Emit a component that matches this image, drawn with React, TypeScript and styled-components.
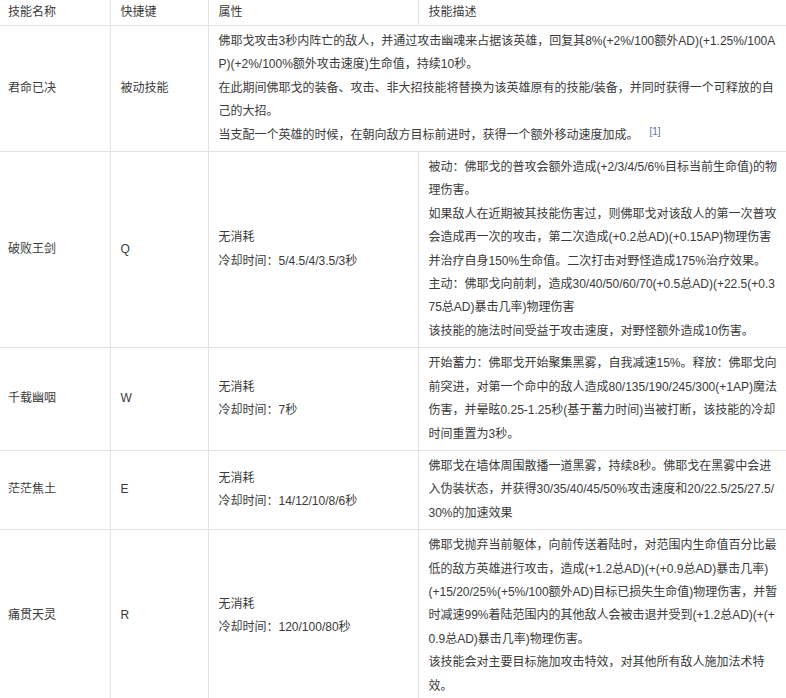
import React from 'react';
import styled, { createGlobalStyle } from 'styled-components';

interface Skill {
  name: string;
  hotkey: string;
  attrs?: string[];
  // paragraphs, each one a list of the visual lines it is set in
  desc: string[][];
  cite?: string;
}

const skills: Skill[] = [
  {
    name: '君命已决',
    hotkey: '被动技能',
    desc: [
      [
        '佛耶戈攻击3秒内阵亡的敌人，并通过攻击幽魂来占据该英雄，回复其8%(+2%/100额外AD)(+1.25%/100A',
        'P)(+2%/100%额外攻击速度)生命值，持续10秒。',
      ],
      [
        '在此期间佛耶戈的装备、攻击、非大招技能将替换为该英雄原有的技能/装备，并同时获得一个可释放的自',
        '己的大招。',
      ],
      ['当支配一个英雄的时候，在朝向敌方目标前进时，获得一个额外移动速度加成。'],
    ],
    cite: '[1]',
  },
  {
    name: '破败王剑',
    hotkey: 'Q',
    attrs: ['无消耗', '冷却时间：5/4.5/4/3.5/3秒'],
    desc: [
      ['被动：佛耶戈的普攻会额外造成(+2/3/4/5/6%目标当前生命值)的物', '理伤害。'],
      [
        '如果敌人在近期被其技能伤害过，则佛耶戈对该敌人的第一次普攻',
        '会造成再一次的攻击，第二次造成(+0.2总AD)(+0.15AP)物理伤害',
        '并治疗自身150%生命值。二次打击对野怪造成175%治疗效果。',
      ],
      ['主动：佛耶戈向前刺，造成30/40/50/60/70(+0.5总AD)(+22.5(+0.3', '75总AD)暴击几率)物理伤害'],
      ['该技能的施法时间受益于攻击速度，对野怪额外造成10伤害。'],
    ],
  },
  {
    name: '千载幽咽',
    hotkey: 'W',
    attrs: ['无消耗', '冷却时间：7秒'],
    desc: [
      [
        '开始蓄力：佛耶戈开始聚集黑雾，自我减速15%。释放：佛耶戈向',
        '前突进，对第一个命中的敌人造成80/135/190/245/300(+1AP)魔法',
        '伤害，并晕眩0.25-1.25秒(基于蓄力时间)当被打断，该技能的冷却',
        '时间重置为3秒。',
      ],
    ],
  },
  {
    name: '茫茫焦土',
    hotkey: 'E',
    attrs: ['无消耗', '冷却时间：14/12/10/8/6秒'],
    desc: [
      [
        '佛耶戈在墙体周围散播一道黑雾，持续8秒。佛耶戈在黑雾中会进',
        '入伪装状态，并获得30/35/40/45/50%攻击速度和20/22.5/25/27.5/',
        '30%的加速效果',
      ],
    ],
  },
  {
    name: '痛贯天灵',
    hotkey: 'R',
    attrs: ['无消耗', '冷却时间：120/100/80秒'],
    desc: [
      [
        '佛耶戈抛弃当前躯体，向前传送着陆时，对范围内生命值百分比最',
        '低的敌方英雄进行攻击，造成(+1.2总AD)(+(+0.9总AD)暴击几率)',
        '(+15/20/25%(+5%/100额外AD)目标已损失生命值)物理伤害，并暂',
        '时减速99%着陆范围内的其他敌人会被击退并受到(+1.2总AD)(+(+',
        '0.9总AD)暴击几率)物理伤害。',
      ],
      ['该技能会对主要目标施加攻击特效，对其他所有敌人施加法术特', '效。'],
    ],
  },
];

const GlobalStyle = createGlobalStyle`
  body {
    margin: 0;
    background: #fff;
    font-family: "Liberation Sans", "Noto Sans CJK SC", sans-serif;
    font-size: 12px;
    color: #3a3a3a;
  }
`;

const Table = styled.table`
  width: 786px;
  border-collapse: collapse;
  table-layout: fixed;
`;

const HeadCell = styled.th<{ $first?: boolean }>`
  height: 25px;
  padding: 0 10px 0 ${({ $first }) => ($first ? '8px' : '10px')};
  font-weight: normal;
  text-align: left;
  line-height: 23.4px;
  border-bottom: 1px solid #e3e3e3;
  border-right: 1px solid #e3e3e3;

  &:last-child {
    border-right: none;
  }
`;

const Cell = styled.td<{ $first?: boolean }>`
  padding: 4px 8px 4px ${({ $first }) => ($first ? '8px' : '10px')};
  vertical-align: middle;
  line-height: 23.4px;
  white-space: nowrap;
  border-bottom: 1px solid #e3e3e3;
  border-right: 1px solid #e3e3e3;

  &:last-child {
    border-right: none;
  }
`;

const Para = styled.p`
  margin: 0;
`;

const Cite = styled.sup`
  margin-left: 11px;
  font-size: 10px;
  line-height: 0;
  color: #5d6fa6;
  vertical-align: 4px;
`;

export default function App() {
  return (
    <>
      <GlobalStyle />
      <Table>
        <colgroup>
          <col style={{ width: 110 }} />
          <col style={{ width: 98 }} />
          <col style={{ width: 210 }} />
          <col />
        </colgroup>
        <thead>
          <tr>
            <HeadCell $first>技能名称</HeadCell>
            <HeadCell>快捷键</HeadCell>
            <HeadCell>属性</HeadCell>
            <HeadCell>技能描述</HeadCell>
          </tr>
        </thead>
        <tbody>
          {skills.map(skill => (
            <tr key={skill.name}>
              <Cell $first>{skill.name}</Cell>
              <Cell>{skill.hotkey}</Cell>
              {skill.attrs && (
                <Cell>
                  {skill.attrs.map(a => (
                    <Para key={a}>{a}</Para>
                  ))}
                </Cell>
              )}
              <Cell colSpan={skill.attrs ? 1 : 2}>
                {skill.desc.map((para, i) => (
                  <Para key={i}>
                    {para.map((line, j) => (
                      <React.Fragment key={j}>
                        {j > 0 && <br />}
                        {line}
                      </React.Fragment>
                    ))}
                    {skill.cite && i === skill.desc.length - 1 && <Cite>{skill.cite}</Cite>}
                  </Para>
                ))}
              </Cell>
            </tr>
          ))}
        </tbody>
      </Table>
    </>
  );
}
